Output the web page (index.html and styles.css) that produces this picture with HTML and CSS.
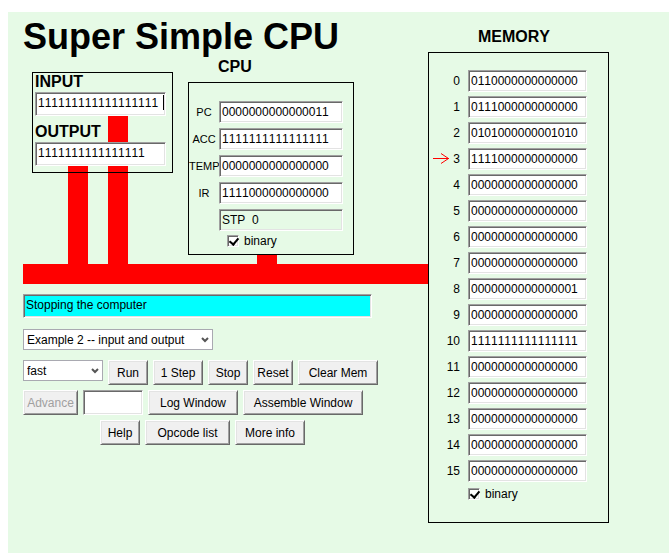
FILE: index.html
```
<!DOCTYPE html>
<html lang="en">
<head>
<meta charset="utf-8">
<title>Super Simple CPU</title>
<link rel="stylesheet" href="styles.css">
</head>
<body>
<main class="app">
  <div class="machine">
    <h1>Super Simple CPU</h1>

    <div class="diagram">
      <div class="wire wire-output"></div>
      <div class="wire wire-input"></div>
      <div class="wire wire-cpu"></div>

      <div class="panel io">
        <label class="title" for="input">INPUT</label>
        <div class="io-field">
          <input class="field" id="input" value="111111111111111111">
          <span class="caret"></span>
        </div>
        <label class="title second" for="output">OUTPUT</label>
        <input class="field" id="output" value="1111111111111111">
      </div>

      <section class="cpu">
        <h2 class="title">CPU</h2>
        <div class="panel registers">
          <label for="pc">PC</label><input class="field" id="pc" value="0000000000000011">
          <label for="acc">ACC</label><input class="field" id="acc" value="1111111111111111">
          <label for="temp">TEMP</label><input class="field" id="temp" value="0000000000000000">
          <label for="ir">IR</label><input class="field" id="ir" value="1111000000000000">
          <input class="field decoded" aria-label="Decoded instruction" value="STP  0" readonly>
          <label class="check"><input type="checkbox" checked> binary</label>
        </div>
      </section>
    </div>
    <div class="bus"></div>

    <form class="controls">
      <input class="field status" aria-label="Status" value="Stopping the computer" readonly>
      <select class="example" aria-label="Example program"><option>Example 2 -- input and output</option></select>
      <div class="row">
        <select class="speed" aria-label="Speed"><option>fast</option></select>
        <button type="button" class="w40">Run</button>
        <button type="button" class="w50">1 Step</button>
        <button type="button" class="w40">Stop</button>
        <button type="button" class="w40">Reset</button>
        <button type="button" class="w80">Clear Mem</button>
      </div>
      <div class="row">
        <button type="button" class="w55" disabled>Advance</button>
        <input class="field steps" aria-label="Steps to advance">
        <button type="button" class="w90">Log Window</button>
        <button type="button" class="w120">Assemble Window</button>
      </div>
      <div class="row links">
        <button type="button" class="w40">Help</button>
        <button type="button" class="w85">Opcode list</button>
        <button type="button" class="w70">More info</button>
      </div>
    </form>
  </div>

  <section class="memory">
    <h2 class="title">MEMORY</h2>
    <div class="panel cells">
      <label for="m0">0</label><input class="field" id="m0" value="0110000000000000">
      <label for="m1">1</label><input class="field" id="m1" value="0111000000000000">
      <label for="m2">2</label><input class="field" id="m2" value="0101000000001010">
      <label for="m3"><svg class="arrow" width="16" height="11" viewBox="0 0 16 11" aria-hidden="true"><path d="M0 5.500H16M8 .5L15.500 5.500L8 10.500"/></svg>3</label><input class="field" id="m3" value="1111000000000000">
      <label for="m4">4</label><input class="field" id="m4" value="0000000000000000">
      <label for="m5">5</label><input class="field" id="m5" value="0000000000000000">
      <label for="m6">6</label><input class="field" id="m6" value="0000000000000000">
      <label for="m7">7</label><input class="field" id="m7" value="0000000000000000">
      <label for="m8">8</label><input class="field" id="m8" value="0000000000000001">
      <label for="m9">9</label><input class="field" id="m9" value="0000000000000000">
      <label for="m10">10</label><input class="field" id="m10" value="1111111111111111">
      <label for="m11">11</label><input class="field" id="m11" value="0000000000000000">
      <label for="m12">12</label><input class="field" id="m12" value="0000000000000000">
      <label for="m13">13</label><input class="field" id="m13" value="0000000000000000">
      <label for="m14">14</label><input class="field" id="m14" value="0000000000000000">
      <label for="m15">15</label><input class="field" id="m15" value="0000000000000000">
      <label class="check"><input type="checkbox" checked> binary</label>
    </div>
  </section>
</main>
</body>
</html>
```
FILE: styles.css
```
* { box-sizing: border-box; }

body {
  margin: 12px 0 0 8px;
  background: #fff;
  color: #000;
  font: 12px/14px "Liberation Sans", Arial, sans-serif;
}

body, input, select, button { font-kerning: none; }

.app {
  display: flex;
  align-items: flex-start;
  min-height: calc(100vh - 12px);
  padding-left: 15px;
  background: #e6fae6;
}

.machine { flex: 0 0 405px; padding-top: 5px; }

h1 { margin: 0; font-size: 36px; line-height: 40px; white-space: nowrap; }

.title {
  display: block;
  margin: 0;
  font-size: 16px;
  font-weight: bold;
  line-height: 20px;
}

.panel { border: 1px solid #000; }

/* Sunken text fields */
.field {
  display: block;
  width: 100%;
  height: 22px;
  margin: 0;
  padding: 0 2px 1px;
  border: 1px solid;
  border-color: #a0a0a0 #fff #fff #a0a0a0;
  border-radius: 0;
  box-shadow: inset 1px 1px #696969, inset -1px -1px #e3e3e3;
  background: #fff;
  color: #000;
  font: inherit;
  outline: 0;
}

/* Input/output ports and CPU, joined to the bus by wires behind them */
.diagram {
  position: relative;
  z-index: 0;
  display: flex;
  align-items: flex-start;
  gap: 15px;
  padding: 0 0 9px 9px;
}

.wire {
  position: absolute;
  z-index: -1;
  bottom: 0;
  width: 20px;
  background: #f00;
}
.wire-output { left: 45px; top: 109px; }
.wire-input { left: 85px; top: 59px; }
.wire-cpu { left: 234px; height: 9px; }

.bus { height: 20px; background: #f00; }

.io { width: 141px; margin-top: 15px; padding: 0 6px 6px 2px; }
.io .title { margin-bottom: 1px; line-height: 18px; }
.io .second { margin-top: 7px; }
.io .field { height: 24px; padding-bottom: 3px; }
.io-field { position: relative; }
.caret {
  position: absolute;
  top: 3px;
  right: 2px;
  width: 1px;
  height: 15px;
  background: #000;
}

.cpu { width: 166px; }
.cpu .title { margin: 0 0 5px 30px; }

.registers {
  display: grid;
  grid-template-columns: 30px 124px;
  row-gap: 5px;
  align-items: center;
  padding: 18px 0 6px;
}
.registers > label { text-align: center; font-size: 11px; }
.registers .decoded, .registers .check { grid-column: 2; }
.decoded { background: #e6fae6; }

.registers .check, .cells .check {
  display: flex;
  align-items: center;
  gap: 5px;
  font-size: 12px;
}
.registers .check { margin: -2px 0 0 8px; }

.check input {
  appearance: none;
  width: 12px;
  height: 12px;
  margin: 0;
  border: 1px solid;
  border-color: #a0a0a0 #fff #fff #a0a0a0;
  box-shadow: inset 1px 1px #696969, inset -1px -1px #e3e3e3;
  background: #fff;
}
.check input:checked::before {
  content: "";
  display: block;
  width: 4px;
  height: 7px;
  margin: 0 0 0 3px;
  border: solid #000;
  border-width: 0 2px 2px 0;
  transform: rotate(40deg);
}

/* Control area */
.controls { display: flex; flex-direction: column; gap: 5px; padding-top: 10px; }
.status { width: 349px; height: 24px; padding-bottom: 3px; background: #0ff; }

select {
  appearance: none;
  height: 21px;
  padding: 0 3px;
  border: 1px solid #a9a9b1;
  border-radius: 0;
  color: #000;
  font: inherit;
  background: #fff url("data:image/svg+xml,%3Csvg xmlns='http://www.w3.org/2000/svg' width='8' height='6'%3E%3Cpath d='M1 1L4 4L7 1' fill='none' stroke='%23555' stroke-width='2'/%3E%3C/svg%3E") no-repeat right 3px center;
}
.example { width: 190px; margin: 6px 0 5px; }
.speed { width: 80px; }

.row { display: flex; align-items: flex-start; gap: 5px; }
.links { margin-left: 77px; }

button {
  height: 25px;
  padding: 0;
  border: 1px solid;
  border-color: #fff #696969 #696969 #fff;
  border-radius: 0;
  box-shadow: inset 1px 1px #e3e3e3, inset -1px -1px #a0a0a0;
  background: #f0f0f0;
  color: #000;
  font: inherit;
  white-space: nowrap;
}
button:disabled { color: #a0a0a0; }

.steps { width: 60px; height: 25px; }
.w40 { width: 40px; }
.w50 { width: 50px; }
.w55 { width: 55px; }
.w70 { width: 70px; }
.w80 { width: 80px; }
.w85 { width: 85px; }
.w90 { width: 90px; }
.w120 { width: 120px; }

/* Memory */
.memory { width: 181px; padding-top: 15px; }
.memory .title { margin: 0 0 5px 50px; }

.cells {
  display: grid;
  grid-template-columns: 31px 119px;
  gap: 4px 8px;
  align-items: center;
  padding: 17px 0 21px;
}
.cells > label { position: relative; text-align: right; }
.cells .check { grid-column: 2; margin-top: 1px; }

.arrow {
  position: absolute;
  top: 1px;
  left: 4px;
  fill: none;
  stroke: #f00;
}
```
